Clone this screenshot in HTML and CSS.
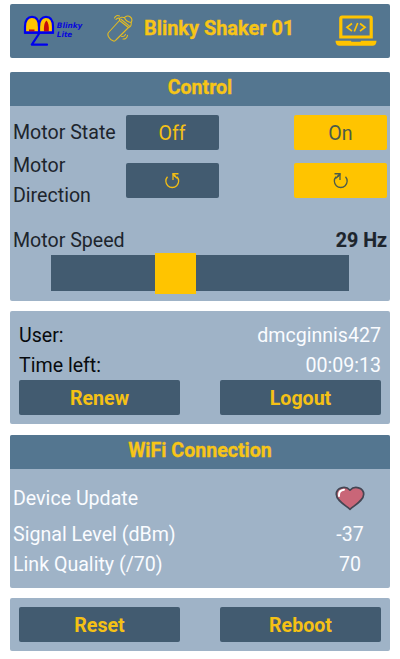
FILE: index.html
```html
<!DOCTYPE html>
<html lang="en">
<head>
<meta charset="utf-8">
<title>Blinky Shaker 01</title>
<link rel="stylesheet" href="styles.css">
</head>
<body>
<header class="card topbar">
  <svg class="logo" width="62" height="34" viewBox="0 0 62 34">
    <path d="M2 19.600V13.500C2 7 5 3.800 9 3.800s7 3.200 7 9.700C16 7 19 3.800 23 3.800S30 7 30 13.500v6.100z" fill="#ffc400" stroke="#00e" stroke-width="2.200"/>
    <path d="M6 16.500h5.500v2H6zM21 18.600c-.3-6 .7-9.400 2.500-11 1.800 2 2.700 5.500 2.300 11z" fill="#c60c0c"/>
    <path d="M16 9v10.500M2 19.600h28M16.500 20L8.800 31.700h15.200" fill="none" stroke="#00e" stroke-width="2.200" stroke-linejoin="round" stroke-linecap="round"/>
    <text class="logo-text" x="33.800" y="14.800" textLength="25.500" lengthAdjust="spacingAndGlyphs">Blinky</text>
    <text class="logo-text" x="33.800" y="23.700" textLength="15.500" lengthAdjust="spacingAndGlyphs">Lite</text>
  </svg>
  <svg class="shaker" width="28" height="30" viewBox="0 0 28 30" fill="none" stroke="#e3bb22" stroke-width="1.100" stroke-linejoin="round" stroke-linecap="round">
    <path d="M12.500 6.500L1.500 18.500c-1 1.200-1 2 0 4.200 1.200 2.300 2.800 3.600 5 4.300 1 .3 1.700-.1 2.400-1L21.500 13.500M12.500 6.500c-.2-1.500.5-3 2-3.200 1-.1 2 0 3 .4M12.500 6.500l9 7M14 5.300l8.500 6.800M21.500 13.500c2-.4 2.900-2 2.700-4.800M17.500 3.700c1.500-2 4.200-2.200 5.900-.7s1.800 3.700.8 5.500M17.500 3.700c1 2.600 3.300 4.400 6.700 4.800M7.500 4c1-2.300 3-3 5-2M9 5.500c.8-1.200 2-1.600 3.300-1.200M14.500 22.500c1.800.3 3.300-.6 4-2.100M16 25c2.500.1 4.100-1.400 4.500-3.700"/>
  </svg>
  <h1 class="title">Blinky Shaker 01</h1>
  <svg class="laptop" width="42" height="31" viewBox="0 0 42 31">
    <path d="M5.800 22V3.200q0-1.200 1.200-1.200h28q1.200 0 1.200 1.200V22z" fill="none" stroke="#ffc400" stroke-width="3.200"/>
    <path d="M.5 25.700h15.700v1h9.600v-1h15.700c0 3-1.500 5-4 5H4.500c-2.500 0-4-2-4-5z" fill="#ffc400"/>
    <path d="M17 8.500l-5 3.800 5 3.800M25 8.500l5 3.800-5 3.800M22.700 8l-3.400 8.500" fill="none" stroke="#ffc400" stroke-width="1.700"/>
  </svg>
</header>

<section class="card control">
  <h2 class="card-title">Control</h2>
  <div class="row state">
    <span class="label">Motor State</span>
    <button class="btn plain">Off</button>
    <button class="btn plain active">On</button>
  </div>
  <div class="row direction">
    <span class="label">Motor Direction</span>
    <button class="btn plain" aria-label="Counterclockwise">
      <svg width="16" height="18" viewBox="0 0 16 18" fill="none" stroke="#f2bd14" stroke-width="1.300"><path d="M3.500 4.800a6.400 6.400 0 1 0 9.500 0"/><path d="M9 8V2.500l4.500 4"/><path d="M8.500 1.800h6M9 2.300l3 2.500" stroke-width="1.500"/></svg>
    </button>
    <button class="btn plain active" aria-label="Clockwise">
      <svg width="16" height="18" viewBox="0 0 16 18" fill="none" stroke="#4a5b4c" stroke-width="1.300"><path d="M12.500 4.800a6.400 6.400 0 1 1-9.500 0"/><path d="M7 8V2.500l-4.500 4"/><path d="M7.500 1.800h-6M7 2.300L4 4.800" stroke-width="1.500"/></svg>
    </button>
  </div>
  <div class="speed"><span>Motor Speed</span><b>29 Hz</b></div>
  <div class="slider"><div class="thumb"></div></div>
</section>

<section class="card session">
  <div class="info"><span>User:</span><span class="value">dmcginnis427</span></div>
  <div class="info"><span>Time left:</span><span class="value">00:09:13</span></div>
  <div class="actions"><button class="btn">Renew</button><button class="btn">Logout</button></div>
</section>

<section class="card wifi">
  <h2 class="card-title">WiFi Connection</h2>
  <div class="stat update"><span>Device Update</span>
    <span class="reading"><svg class="heart" width="30" height="25" viewBox="0 0 30 25">
      <path d="M15 23.300C10 19 1.300 14.500 1.300 8.300 1.300 1.500 10.500-.8 15 4.200c4.500-5 13.700-2.700 13.700 4.100C28.700 14.500 20 19 15 23.300z" fill="#c96678" stroke="#454653" stroke-width="1.700" stroke-linejoin="round"/>
      <path d="M4 10c-.3-4 1.500-6 5-6.300" fill="none" stroke="#fff" stroke-width="2" stroke-linecap="round"/>
    </svg></span>
  </div>
  <div class="stat"><span>Signal Level (dBm)</span><span class="reading">-37</span></div>
  <div class="stat"><span>Link Quality (/70)</span><span class="reading">70</span></div>
</section>

<section class="card power">
  <div class="actions"><button class="btn">Reset</button><button class="btn">Reboot</button></div>
</section>
</body>
</html>
```
FILE: styles.css
```css
* { box-sizing: border-box; }
body {
  margin: 0;
  padding: 4px 10px 0;
  background: #fff;
  color: #1d252d;
  font: 19.6px/30px Roboto, sans-serif;
}
.card {
  width: 380px;
  background: #9fb3c7;
  border-radius: 2px;
  overflow: hidden;
}
.topbar {
  display: flex;
  align-items: flex-start;
  height: 54px;
  margin-bottom: 14px;
  background: #547690;
}
.logo { margin: 9px 0 0 13px; }
.logo-text { fill: #0808dc; font: italic bold 7.5px "DejaVu Sans", sans-serif; }
.shaker { margin: 10px 0 0 22px; }
.title {
  margin: 10px 0 0 9px;
  width: 151px;
  color: #f7c517;
  font-size: 19.9px;
  line-height: 30px;
  font-weight: 700;
  -webkit-text-stroke: 0.3px #f7c517;
  white-space: nowrap;
}
.laptop { margin: 11px 0 0 40px; }
.card-title {
  margin: 0;
  height: 34px;
  padding-top: 1px;
  background: #547690;
  color: #f7c517;
  font-size: 19.6px;
  line-height: 30px;
  font-weight: 700;
  -webkit-text-stroke: 0.3px #f7c517;
  text-align: center;
}
.control { height: 229px; margin-bottom: 10px; }
.row {
  display: grid;
  grid-template-columns: 112.5px 93px 93px;
  align-items: center;
  padding: 0 3px;
}
.label { padding-top: 1px; }
.row .active { margin-left: 75.5px; width: 93px; }
.state { height: 35px; margin-top: 9px; }
.direction { height: 60px; }
.direction .btn { padding-bottom: 2px; }
.btn {
  display: flex;
  align-items: center;
  justify-content: center;
  height: 35px;
  padding: 2px 0 0;
  border: 0;
  border-radius: 2px;
  background: #425b70;
  color: #f5c115;
  font: 700 19.6px/30px Roboto, sans-serif;
}
.plain { font-weight: 400; }
.active { background: #ffc400; color: #4a5b4c; }
.speed { display: flex; justify-content: space-between; padding: 0 3px; margin-top: 16px; }
.speed b { -webkit-text-stroke: 0.2px #1d252d; }
.slider {
  width: 298px;
  height: 36px;
  margin: -1px 0 0 41px;
  padding-left: 103.5px;
  background: #425b70;
}
.thumb { width: 41px; height: 41px; background: #ffc400; transform: translateY(-2px); }
.session { height: 113px; padding: 10px 9px 0; margin-bottom: 11px; }
.info { display: flex; justify-content: space-between; color: #080b0e; }
.value { color: #fafcff; }
.actions { display: flex; justify-content: space-between; }
.actions .btn { width: 161px; }
.session .actions { margin-top: -1px; }
.wifi { height: 153px; margin-bottom: 10px; color: #fafcff; }
.stat { display: flex; justify-content: space-between; padding: 0 0 0 3px; }
.update { height: 36px; margin-top: 15px; }
.reading { width: 80px; text-align: center; }
.heart { display: block; margin: 2px auto 0; }
.power { height: 53px; padding: 9px 9px 0; }
```
